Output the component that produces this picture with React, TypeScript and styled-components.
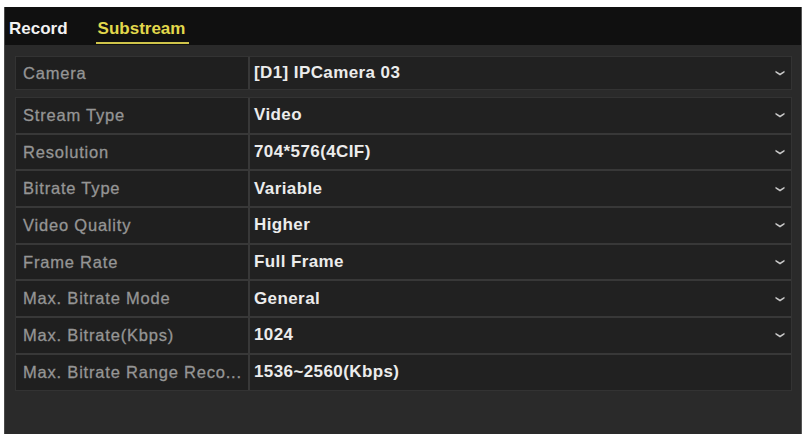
import * as React from 'react';
import styled, { createGlobalStyle } from 'styled-components';

const GlobalStyle = createGlobalStyle`
  html, body {
    margin: 0;
    padding: 0;
    background: #ffffff;
  }
  body {
    font-family: 'Liberation Sans', Arial, sans-serif;
  }
`;

interface Setting {
  label: string;
  value: string;
  select?: boolean;
}

const settings: Setting[] = [
  { label: 'Stream Type', value: 'Video', select: true },
  { label: 'Resolution', value: '704*576(4CIF)', select: true },
  { label: 'Bitrate Type', value: 'Variable', select: true },
  { label: 'Video Quality', value: 'Higher', select: true },
  { label: 'Frame Rate', value: 'Full Frame', select: true },
  { label: 'Max. Bitrate Mode', value: 'General', select: true },
  { label: 'Max. Bitrate(Kbps)', value: '1024', select: true },
  { label: 'Max. Bitrate Range Reco...', value: '1536~2560(Kbps)' },
];

const Chevron: React.FC = () => (
  <svg width="10" height="6" viewBox="0 0 10 6">
    <path d="M0.5 0.8 L5 3.4 L9.5 0.8 L9.5 2.6 L5 5.6 L0.5 2.6 Z" fill="#c8c8c8" />
  </svg>
);

const SettingRow: React.FC<Setting & { short?: boolean }> = ({ label, value, select, short }) => (
  <Row $short={short}>
    <Label>{label}</Label>
    <Value>
      <span>{value}</span>
      {select && <Chevron />}
    </Value>
  </Row>
);

export default function App() {
  return (
    <>
      <GlobalStyle />
      <Window>
        <TabBar>
          <Tab>Record</Tab>
          <Tab $active>Substream</Tab>
        </TabBar>
        <Body>
          <Table>
            <SettingRow label="Camera" value="[D1] IPCamera 03" select short />
          </Table>
          <Table>
            {settings.map((s) => (
              <SettingRow key={s.label} {...s} />
            ))}
          </Table>
        </Body>
      </Window>
    </>
  );
}

const Window = styled.div`
  margin: 7px 0 0 4px;
  width: 796px;
  height: 427px;
  background: #2a2a2a;
  border-left: 1px solid #4a4a4a;
  border-right: 1px solid #555555;
  display: flex;
  flex-direction: column;
`;

const TabBar = styled.div`
  height: 38px;
  background: #101010;
  display: flex;
  align-items: flex-end;
  gap: 24px;
  padding-left: 2px;
`;

const Tab = styled.div<{ $active?: boolean }>`
  font-size: 17px;
  line-height: 16px;
  font-weight: 700;
  color: ${(p) => (p.$active ? '#e2d84c' : '#f2f2f2')};
  padding: 0 4px 5px 2px;
  border-bottom: 2px solid ${(p) => (p.$active ? '#cfc44a' : 'transparent')};
  margin-bottom: 1px;
`;

const Body = styled.div`
  padding: 11px 9px 0 10px;
  display: flex;
  flex-direction: column;
  gap: 7px;
`;

const Table = styled.div`
  display: flex;
  flex-direction: column;
  gap: 2px;
  background: #383838;
  border: 1px solid #333333;
`;

const Row = styled.div<{ $short?: boolean }>`
  display: grid;
  grid-template-columns: 232px 1fr;
  gap: 2px;
  height: ${(p) => (p.$short ? '32px' : '34.7px')};
`;

const Label = styled.div`
  background: #1f1f1f;
  color: #959595;
  font-size: 16.5px;
  font-weight: 400;
  letter-spacing: 0.8px;
  -webkit-text-stroke: 0.3px #959595;
  padding-left: 7px;
  display: flex;
  align-items: center;
  white-space: nowrap;
  overflow: hidden;
`;

const Value = styled.div`
  background: #212121;
  color: #ececec;
  font-size: 17px;
  font-weight: 700;
  letter-spacing: 0.4px;
  padding: 0 6px 0 4px;
  display: flex;
  align-items: center;
  justify-content: space-between;
`;
